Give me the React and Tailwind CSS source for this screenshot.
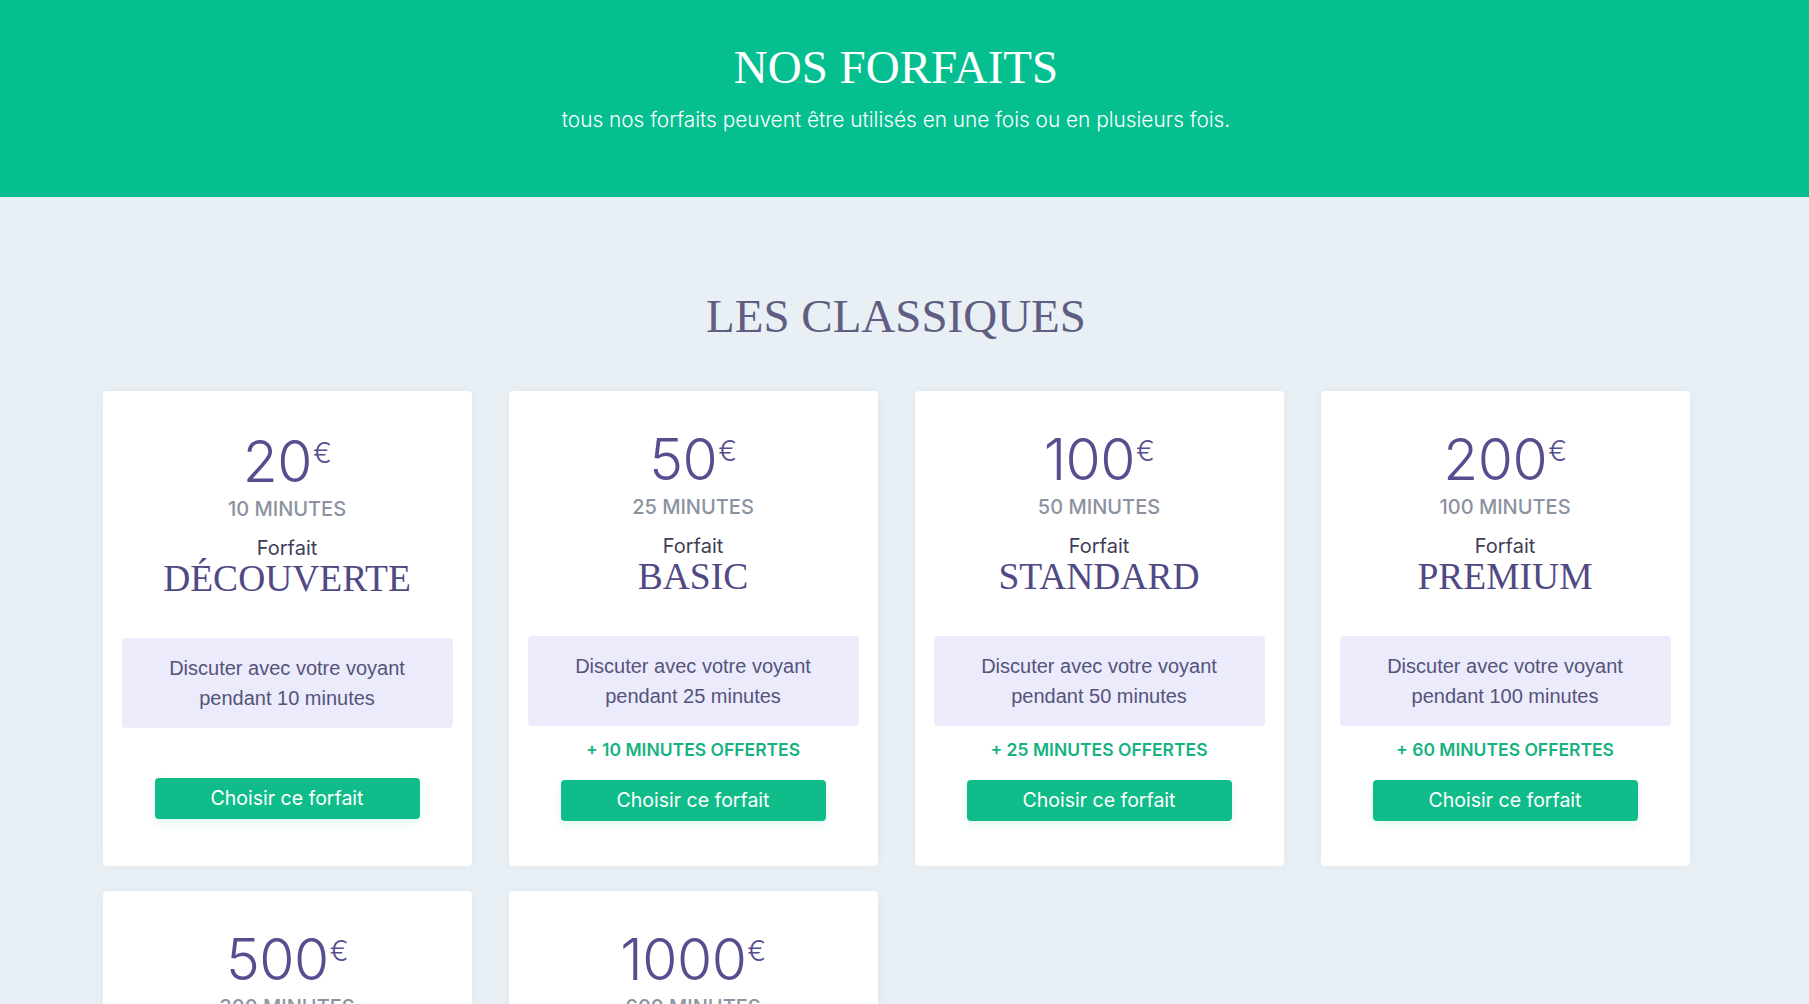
import React from "react";

const cards = [
  { price: "20", minutes: "10 MINUTES", name: "DÉCOUVERTE", desc: "pendant 10 minutes", offer: "" },
  { price: "50", minutes: "25 MINUTES", name: "BASIC", desc: "pendant 25 minutes", offer: "+ 10 MINUTES OFFERTES" },
  { price: "100", minutes: "50 MINUTES", name: "STANDARD", desc: "pendant 50 minutes", offer: "+ 25 MINUTES OFFERTES" },
  { price: "200", minutes: "100 MINUTES", name: "PREMIUM", desc: "pendant 100 minutes", offer: "+ 60 MINUTES OFFERTES" },
  { price: "500", minutes: "300 MINUTES", name: "GOLD", desc: "pendant 300 minutes", offer: "+ 120 MINUTES OFFERTES" },
  { price: "1000", minutes: "600 MINUTES", name: "PLATINE", desc: "pendant 600 minutes", offer: "+ 300 MINUTES OFFERTES" },
];

function Card({ c }) {
  const hasOffer = c.offer !== "";
  return (
    <div
      className={
        hasOffer
          ? "h-[475px] bg-white rounded-[4px] shadow-[0_0_12px_rgba(40,60,90,0.05)] pt-[41px] px-[19px] flex flex-col items-center text-center"
          : "h-[475px] bg-white rounded-[4px] shadow-[0_0_12px_rgba(40,60,90,0.05)] pt-[43px] px-[19px] flex flex-col items-center text-center"
      }
    >
      <div className="text-[57px] leading-[56px] font-light text-[#564e8e] font-['Inter',sans-serif] tracking-[-0.5px]">
        {c.price}
        <span className="inline-block align-top text-[28px] leading-[28px] mt-[5px] ml-[1px]">€</span>
      </div>
      <div className="mt-[5px] text-[20px] leading-[28px] font-medium text-[#8b92a0] font-['Inter',sans-serif]">
        {c.minutes}
      </div>
      <div className="mt-[11px] text-[20px] leading-[28px] text-[#3f3d58] font-['Inter',sans-serif]">Forfait</div>
      <div className="text-[37.5px] leading-[34px] text-[#4f4984] font-['Liberation_Serif',serif]">{c.name}</div>
      <div className="mt-[42px] w-full rounded-[4px] bg-[#ebebfb] py-[15px] text-[20px] leading-[30px] text-[#55537c] font-['Liberation_Sans',Arial,sans-serif]">
        <div>Discuter avec votre voyant</div>
        <div>{c.desc}</div>
      </div>
      <div
        className={
          hasOffer
            ? "mt-[12px] h-[24px] text-[17.5px] leading-[24px] font-semibold text-[#17b281] font-['Inter',sans-serif]"
            : "mt-[12px] h-[20px]"
        }
      >
        {c.offer}
      </div>
      <button className="mt-[18px] w-[265px] h-[41px] rounded-[4px] bg-[#0fbc8a] text-white text-[19.5px] font-['Inter',sans-serif] shadow-[0_4px_10px_rgba(15,188,138,0.12)]">
        Choisir ce forfait
      </button>
    </div>
  );
}

export default function App() {
  return (
    <div className="min-h-screen bg-[#e9f0f5]">
      <header className="bg-[#05bf91] h-[197px] pr-[17px] pt-[39px] text-center text-white">
        <h1 className="text-[47px] leading-[56px] font-['Liberation_Serif',serif] font-normal">NOS FORFAITS</h1>
        <p className="mt-[11px] text-[20.8px] leading-[28px] font-light font-['Inter',sans-serif]">
          tous nos forfaits peuvent être utilisés en une fois ou en plusieurs fois.
        </p>
      </header>
      <section className="pr-[17px] pt-[91px] pb-[40px]">
        <h2 className="text-center text-[47px] leading-[56px] text-[#5f5e82] font-['Liberation_Serif',serif]">
          LES CLASSIQUES
        </h2>
        <div className="mt-[47px] mx-auto w-[1587px] grid grid-cols-4 gap-x-[37px] gap-y-[25px]">
          {cards.map((c) => (
            <Card key={c.price} c={c} />
          ))}
        </div>
      </section>
    </div>
  );
}
